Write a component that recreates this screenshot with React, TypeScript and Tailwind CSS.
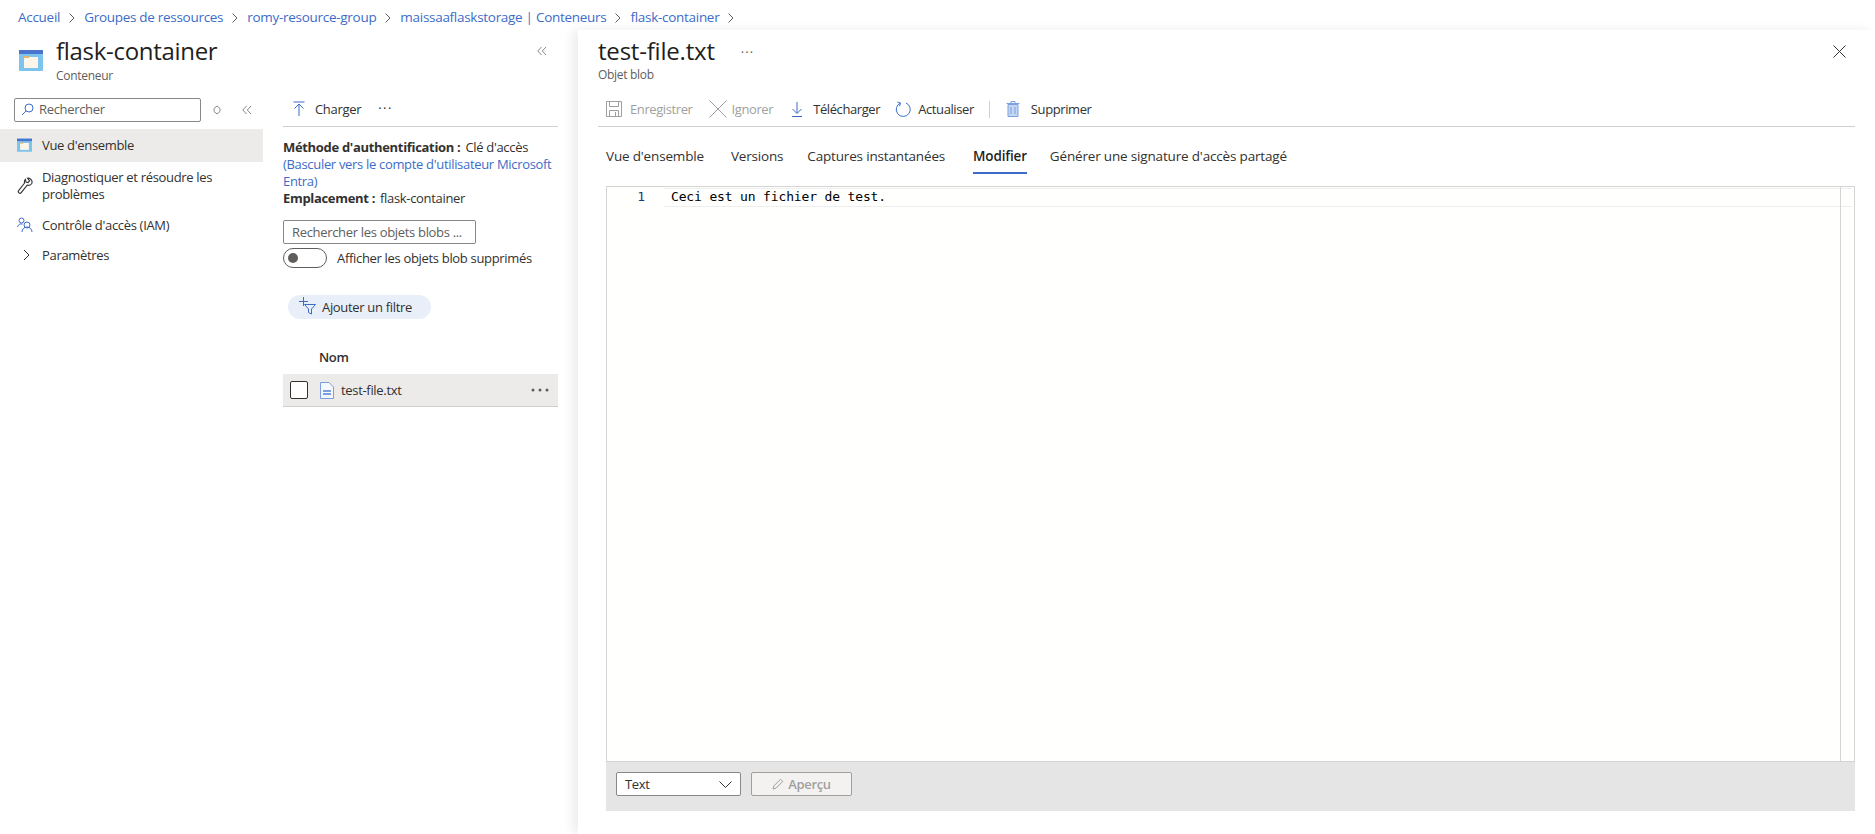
import React from "react";

const Chev = () => (
  <svg width="8" height="12" viewBox="0 0 8 12" fill="none" stroke="#605e5c" strokeWidth="1" className="shrink-0">
    <path d="M1.5 1.5 6 6l-4.500 4.500" />
  </svg>
);

const DoubleChev = ({ className = "" }: { className?: string }) => (
  <svg width="10" height="10" viewBox="0 0 10 10" fill="none" stroke="#8a8886" strokeWidth="1" className={className}>
    <path d="M4.500 1 .8 5l3.700 4M9 1 5.300 5 9 9" />
  </svg>
);

const Box = ({ s = 24 }: { s?: number }) => (
  <svg width={s} height={s} viewBox="0 0 24 24" className="shrink-0">
    <rect x="0" y="1" width="24" height="21" rx="1" fill="#7cc4ee" />
    <rect x="0" y="1" width="24" height="4" fill="#4a75cc" />
    <rect x="5" y="8" width="14" height="11" fill="#fdf6e8" />
    <rect x="5" y="7" width="5" height="2" fill="#e8b36a" />
  </svg>
);

const Crumb = ({ t }: { t: string }) => <span className="text-[#3d6cc8]">{t}</span>;

const Tool = ({ icon, label, off, className = "" }: { icon: React.ReactNode; label: string; off?: boolean; className?: string }) => (
  <div className={`flex items-center ${className}`}>
    {icon}
    <span className={off ? "text-[#a19f9d]" : "text-[#323130]"}>{label}</span>
  </div>
);

export default function App() {
  return (
    <div className="w-[1875px] h-[834px] overflow-hidden bg-white flex flex-col text-[13px] leading-[17px] tracking-[-0.32px] text-[#323130] font-['Open_Sans','Liberation_Sans',sans-serif]">
      <div className="h-[36px] shrink-0 flex items-center pl-[18px] pb-[1px] gap-[8px] text-[13.5px] tracking-[-0.29px]">
        <Crumb t="Accueil" />
        <Chev />
        <Crumb t="Groupes de ressources" />
        <Chev />
        <Crumb t="romy-resource-group" />
        <Chev />
        <Crumb t="maissaaflaskstorage | Conteneurs" />
        <Chev />
        <Crumb t="flask-container" />
        <Chev />
      </div>
      <div className="flex-1 flex min-h-0">
        <div className="w-[578px] shrink-0 flex flex-col">
          <div className="h-[54px] flex pl-[19px] pr-[31px]">
            <div className="pt-[13px] pr-[13px]"><Box /></div>
            <div className="flex-1 pt-[1px]">
              <div className="text-[24px] leading-[28px] tracking-[-0.3px] font-medium text-[#1f1f1f] whitespace-nowrap">flask-container</div>
              <div className="text-[12px] leading-[16px] mt-[3px] tracking-[-0.3px] text-[#605e5c]">Conteneur</div>
            </div>
            <div className="pt-[10px]"><DoubleChev /></div>
          </div>
          <div className="flex flex-1 pt-[8px]">
            <div className="w-[263px] shrink-0">
              <div className="h-[23px] ml-[14px] flex items-center">
                <div className="w-[187px] h-[24px] border border-[#8a8886] rounded-[2px] flex items-center pl-[6px] gap-[5px] text-[#605e5c]">
                  <svg width="13" height="13" viewBox="0 0 13 13" fill="none" stroke="#3d6cc8" strokeWidth="1" className="shrink-0">
                    <circle cx="8" cy="5" r="4" />
                    <path d="M5 8 1 12" />
                  </svg>
                  Rechercher
                </div>
                <svg width="8" height="10" viewBox="0 0 8 10" fill="none" stroke="#8a8886" strokeWidth="1" className="ml-[12px]">
                  <path d="M4 1 7 3.500v3L4 9 1 6.500v-3z" />
                </svg>
                <DoubleChev className="ml-[21px]" />
              </div>
              <div className="mt-[8px] h-[33px] bg-[#edebe9] flex items-center pl-[17px] gap-[10px]">
                <Box s={15} />
                <span>Vue d'ensemble</span>
              </div>
              <div className="mt-[7px] flex items-center pl-[17px] gap-[9px]">
                <svg width="16" height="18" viewBox="0 0 16 18" fill="none" stroke="#323130" strokeWidth="1.1" className="shrink-0">
                  <path d="M10.500 1.200a4 4 0 0 1 4.300 5.300 4 4 0 0 1-4.600 1.600l-6 7.500a1.600 1.600 0 0 1-2.600-2l6-7.600a3.600 3.600 0 0 1 .8-3.600l.6 2.600 2 .6 1.600-1.700z" />
                </svg>
                <span>Diagnostiquer et résoudre les<br />problèmes</span>
              </div>
              <div className="mt-[12px] flex items-center pl-[17px] gap-[9px] h-[20px]">
                <svg width="16" height="16" viewBox="0 0 16 16" fill="none" stroke="#3d6cc8" strokeWidth="1" className="shrink-0">
                  <circle cx="4.500" cy="3.500" r="2.500" />
                  <path d="M.5 10a4 4 0 0 1 5-3" />
                  <circle cx="10" cy="8" r="3" stroke="#3d6cc8" />
                  <path d="M5 15a5 5 0 0 1 10 0" />
                </svg>
                <span>Contrôle d'accès (IAM)</span>
              </div>
              <div className="mt-[10px] flex items-center pl-[23px] gap-[12px] h-[20px]">
                <svg width="7" height="12" viewBox="0 0 7 12" fill="none" stroke="#323130" strokeWidth="1" className="shrink-0">
                  <path d="m1 1 5 5-5 5" />
                </svg>
                <span>Paramètres</span>
              </div>
            </div>
            <div className="ml-[20px] w-[275px] shrink-0">
              <div className="h-[30px] border-b border-[#d2d0ce] flex items-start pl-[9px] -mt-[1px]">
                <div className="flex items-center h-[24px]">
                  <svg width="14" height="16" viewBox="0 0 14 16" fill="none" stroke="#3d6cc8" strokeWidth="1" className="shrink-0">
                    <path d="M1.500 1h11M7 15V3.500M2.500 7.500 7 3l4.500 4.500" />
                  </svg>
                  <span className="ml-[9px]">Charger</span>
                  <span className="ml-[17px] -mt-[1px] tracking-[1.5px] text-[#323130]">···</span>
                </div>
              </div>
              <div className="pt-[12px]">
                <div className="flex"><b className="font-bold">Méthode d'authentification :</b><span className="ml-[5px]">Clé d'accès</span></div>
                <div className="text-[#3d6cc8]">(Basculer vers le compte d'utilisateur Microsoft<br />Entra)</div>
                <div className="flex"><b className="font-bold">Emplacement :</b><span className="ml-[5px]">flask-container</span></div>
              </div>
              <div className="mt-[13px] w-[193px] h-[24px] border border-[#8a8886] rounded-[2px] pl-[8px] flex items-center text-[#605e5c] whitespace-nowrap">Rechercher les objets blobs ...</div>
              <div className="mt-[4px] flex items-center h-[20px]">
                <div className="w-[44px] h-[20px] border border-[#605e5c] rounded-full flex items-center pl-[4px] shrink-0">
                  <div className="w-[10px] h-[10px] bg-[#605e5c] rounded-full" />
                </div>
                <span className="ml-[10px] whitespace-nowrap">Afficher les objets blob supprimés</span>
              </div>
              <div className="mt-[27px] ml-[5px] w-[143px] h-[24px] bg-[#e9eff9] rounded-full flex items-center pl-[11px] gap-[5px]">
                <svg width="18" height="18" viewBox="0 0 18 18" fill="none" stroke="#3d6cc8" strokeWidth="1" className="shrink-0 -mt-[3px]">
                  <path d="M4.500 0v9M0 4.500h9M5.500 7.500h11l-4 4.500v5l-3-1.500V12z" />
                </svg>
                <span>Ajouter un filtre</span>
              </div>
              <div className="mt-[30px] pl-[36px] font-semibold">Nom</div>
              <div className="mt-[8px] h-[33px] bg-[#edebe9] border-b border-[#d2d0ce] flex items-center pl-[7px] pr-[9px]">
                <div className="w-[18px] h-[18px] border border-[#323130] rounded-[2px] bg-white shrink-0" />
                <svg width="14" height="17" viewBox="0 0 14 17" className="ml-[12px] shrink-0">
                  <path d="M.5.500h8.500l4.500 4.500v11.500H.5z" fill="#f4f8fd" stroke="#7ca0de" />
                  <path d="M3 8h8v2H3zm0 3h8v2H3z" fill="#7ca0de" />
                </svg>
                <span className="ml-[7px]">test-file.txt</span>
                <svg width="18" height="4" viewBox="0 0 18 4" fill="#605e5c" className="ml-auto">
                  <circle cx="2" cy="2" r="1.500" /><circle cx="9" cy="2" r="1.500" /><circle cx="16" cy="2" r="1.500" />
                </svg>
              </div>
            </div>
          </div>
        </div>
        <div className="flex-1 min-w-0 flex flex-col bg-white shadow-[-6px_0_10px_rgba(0,0,0,0.07)] pl-[20px] pr-[20px] -mt-[6px] pt-[6px]">
          <div className="h-[63px] flex items-start">
            <div className="pt-[1px]">
              <div className="text-[24px] leading-[28px] tracking-[-0.2px] font-medium text-[#1f1f1f]">test-file.txt</div>
              <div className="text-[12px] leading-[16px] mt-[2px] tracking-[-0.3px] text-[#605e5c]">Objet blob</div>
            </div>
            <span className="ml-[26px] mt-[8px] text-[#605e5c] tracking-[1px]">···</span>
            <svg width="13" height="13" viewBox="0 0 13 13" fill="none" stroke="#323130" strokeWidth="1" className="ml-auto mt-[9px] mr-[9px]">
              <path d="m.5.500 12 12m0-12-12 12" />
            </svg>
          </div>
          <div className="h-[30px] -mt-[2px] border-b border-[#d2d0ce] flex items-start pl-[8px] pr-0 tracking-[-0.4px]">
            <div className="flex items-center h-[24px]">
              <Tool off label="Enregistrer" icon={
                <svg width="16" height="16" viewBox="0 0 16 16" fill="none" stroke="#a19f9d" strokeWidth="1" className="mr-[8px]">
                  <path d="M.5.500h15v15H.5zM3.500.5v5h9v-5M3.500 15.500v-6h9v6M9.500 11v4.500" />
                </svg>} />
              <Tool off className="ml-[16px]" label="Ignorer" icon={
                <svg width="18" height="18" viewBox="0 0 18 18" fill="none" stroke="#a19f9d" strokeWidth="1" className="mr-[5px]">
                  <path d="m.5.500 17 17m0-17-17 17" />
                </svg>} />
              <Tool className="ml-[18px]" label="Télécharger" icon={
                <svg width="12" height="16" viewBox="0 0 12 16" fill="none" stroke="#3d6cc8" strokeWidth="1" className="mr-[10px]">
                  <path d="M6 1v11M1.500 8 6 12.500 10.500 8M1 15.500h10" />
                </svg>} />
              <Tool className="ml-[15px]" label="Actualiser" icon={
                <svg width="16" height="16" viewBox="0 0 16 16" fill="none" stroke="#3d6cc8" strokeWidth="1" className="mr-[7px]">
                  <path d="M5.500 2a7 7 0 1 0 5.500 0M2.500 1l3 1.200-1 3" />
                </svg>} />
              <div className="w-px h-[17px] bg-[#d2d0ce] ml-[15px]" />
              <Tool className="ml-[16px]" label="Supprimer" icon={
                <svg width="14" height="16" viewBox="0 0 14 16" className="mr-[11px]">
                  <path d="M5 .5h4v2H5z" fill="none" stroke="#7ca0de" />
                  <path d="M.5 2.500h13" stroke="#7ca0de" fill="none" />
                  <path d="M2 3.500h10v12H2z" fill="#c5d6f2" stroke="#7ca0de" />
                  <path d="M5 6v7M9 6v7" stroke="#7ca0de" fill="none" />
                </svg>} />
            </div>
          </div>
          <div className="h-[39px] mt-[21px] flex items-start pl-[8px] text-[13.5px] tracking-[-0.17px]">
            <span>Vue d'ensemble</span>
            <span className="ml-[27px]">Versions</span>
            <span className="ml-[24px]">Captures instantanées</span>
            <span className="ml-[28px] h-[26px] border-b-2 border-[#3d6cc8] font-semibold text-[#1f1f1f]">Modifier</span>
            <span className="ml-[23px]">Générer une signature d'accès partagé</span>
          </div>
          <div className="ml-[8px] mt-[-1px] flex-1 flex flex-col mb-[23px]">
            <div className="relative flex-1 border-t border-x border-[#d4d4d4] bg-[#fffffe] pt-[1px] pr-[2px] flex items-start min-h-0">
              <div className="w-[57px] shrink-0 h-[19px] pr-[19px] text-right font-['DejaVu_Sans_Mono',monospace] text-[13px] leading-[17px] tracking-[-0.15px] text-[#1e3a6e]">1</div>
              <div className="flex-1 h-[19px] border-y border-[#eeeeee] font-['DejaVu_Sans_Mono',monospace] text-[13px] leading-[15px] tracking-[-0.15px] text-black pl-[7px] whitespace-pre">Ceci est un fichier de test.</div>
              <div className="absolute top-0 bottom-0 right-[13px] w-px bg-[#d4d4d4]" />
            </div>
            <div className="h-[50px] shrink-0 bg-[#e5e5e5] flex items-start pt-[10px] pl-[10px] border-t border-[#d4d4d4]">
              <div className="w-[125px] h-[24px] bg-white border border-[#8a8886] rounded-[2px] flex items-center justify-between pl-[8px] pr-[8px]">
                <span>Text</span>
                <svg width="13" height="7" viewBox="0 0 13 7" fill="none" stroke="#323130" strokeWidth="1"><path d="m.5.500 6 6 6-6" /></svg>
              </div>
              <div className="ml-[10px] w-[101px] h-[24px] bg-[#f3f2f1] border border-[#a19f9d] rounded-[2px] flex items-center justify-center gap-[4px] font-semibold text-[#a19f9d]">
                <svg width="12" height="12" viewBox="0 0 12 12" fill="none" stroke="#a19f9d" strokeWidth="1"><path d="m1 11 .8-3L8.500 1.300l2.200 2.200L4 10.200z" /></svg>
                Aperçu
              </div>
            </div>
          </div>
        </div>
      </div>
    </div>
  );
}
